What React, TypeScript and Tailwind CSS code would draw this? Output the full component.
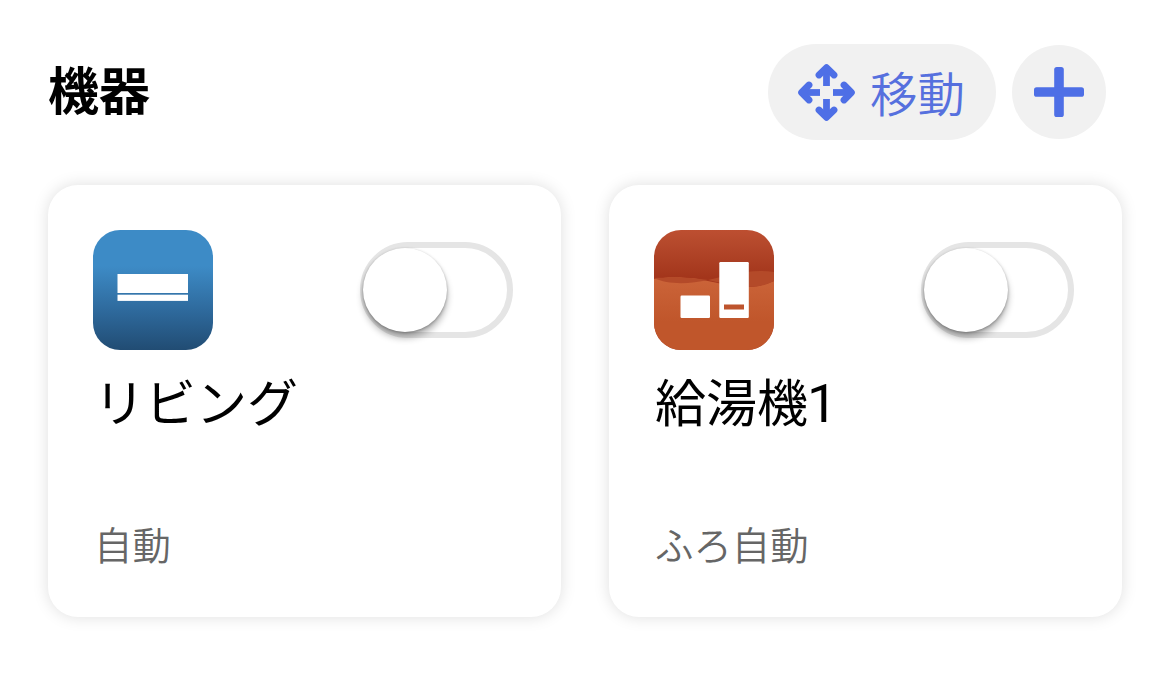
import React from 'react';

interface Device {
  name: string;
  unit?: string;
  mode: string;
  icon: React.ReactNode;
}

const AirConditionerIcon: React.FC = () => (
  <svg className="h-[120px] w-[120px]" viewBox="0 0 120 120">
    <defs>
      <linearGradient id="ac-bg" x1="0" y1="0" x2="0" y2="1">
        <stop offset="0" stopColor="#3d8bc6" />
        <stop offset="0.3" stopColor="#3d8bc6" />
        <stop offset="0.7" stopColor="#2d6799" />
        <stop offset="1" stopColor="#214c73" />
      </linearGradient>
    </defs>
    <rect width="120" height="120" rx="27" fill="url(#ac-bg)" />
    <rect x="24.5" y="44" width="70.5" height="19" fill="#fff" />
    <rect x="24.5" y="64.7" width="70.5" height="6.2" fill="#fff" />
  </svg>
);

const WaterHeaterIcon: React.FC = () => (
  <svg className="h-[120px] w-[120px]" viewBox="0 0 120 120">
    <defs>
      <linearGradient id="heater-top" x1="0" y1="0" x2="0" y2="60" gradientUnits="userSpaceOnUse">
        <stop offset="0" stopColor="#bd4f31" />
        <stop offset="0.25" stopColor="#b4482b" />
        <stop offset="0.8" stopColor="#a3351b" />
      </linearGradient>
      <linearGradient id="heater-water" x1="0" y1="48" x2="0" y2="120" gradientUnits="userSpaceOnUse">
        <stop offset="0" stopColor="#cb6439" />
        <stop offset="0.6" stopColor="#c0562b" />
        <stop offset="1" stopColor="#c0562b" />
      </linearGradient>
      <clipPath id="heater-clip">
        <rect width="120" height="120" rx="27" />
      </clipPath>
    </defs>
    <g clipPath="url(#heater-clip)">
      <rect width="120" height="120" fill="url(#heater-top)" />
      <path d="M0 49C10 47 30 47 44 49C60 52 78 57 94 57C106 57 114 53 120 51V120H0Z" fill="url(#heater-water)" />
      <path d="M0 48C14 55 36 54 54 50C38 47 14 47 0 48Z" fill="#b44a29" />
      <path d="M54 50C72 46 96 38 120 42V51C112 55 106 57 94 57C78 57 68 53 54 50Z" fill="#b44a29" />
    </g>
    <rect x="26.5" y="65.5" width="29.5" height="22.5" rx="1.2" fill="#fff" />
    <rect x="65.3" y="32" width="29.5" height="56" rx="1.2" fill="#fff" />
    <rect x="70" y="74.5" width="20" height="5" fill="#be542d" />
  </svg>
);

const MoveIcon: React.FC = () => (
  <svg className="h-[58px] w-[58px]" viewBox="-28.5 -29.5 58 58" fill="none" stroke="#4e6fe6" strokeWidth="6.8">
    {[0, 90, 180, 270].map((angle) => (
      <g key={angle} transform={`rotate(${angle})`}>
        <path d="M0 -24V-6.5" />
        <path d="M-7.5 -17.5L0 -24.9L7.5 -17.5" strokeLinecap="round" strokeLinejoin="round" />
      </g>
    ))}
  </svg>
);

const PlusIcon: React.FC = () => (
  <svg className="h-[50px] w-[50px]" viewBox="0 0 50 50" fill="#4e6fe6">
    <rect x="20.2" width="9.6" height="50" rx="2.6" />
    <rect y="20.2" width="50" height="9.6" rx="2.6" />
  </svg>
);

const Toggle: React.FC<{ label: string }> = ({ label }) => {
  const [on, setOn] = React.useState(false);

  return (
    <button
      role="switch"
      aria-checked={on}
      aria-label={label}
      onClick={() => setOn(!on)}
      className={`flex h-24 w-[153px] items-center rounded-full border-[6px] border-[#e5e5e5] ${on ? 'justify-end bg-[#4e6fe6]' : 'bg-white'}`}
    >
      <span className="-mx-[3px] h-[84px] w-[84px] rounded-full bg-white shadow-[0_6px_7px_rgba(0,0,0,0.3),0_1px_3px_rgba(0,0,0,0.3)]" />
    </button>
  );
};

const DeviceCard: React.FC<{ device: Device }> = ({ device }) => (
  <div className="flex h-[432px] flex-col rounded-[30px] bg-white px-[45px] pt-[45px] shadow-[0_0_16px_rgba(0,0,0,0.13)]">
    <div className="flex items-center justify-between pr-[3px]">
      {device.icon}
      <Toggle label={device.name} />
    </div>
    <h2 className="mt-5 h-[60px] pl-px text-[51px] leading-[60px] font-normal whitespace-nowrap text-black">
      {device.name}
      {device.unit && <span className="-ml-px font-[Roboto] text-[54px] leading-none font-normal">{device.unit}</span>}
    </h2>
    <p className="mt-[89px] pl-px text-[38.4px] leading-[48px] font-[350] whitespace-nowrap text-[#666]">{device.mode}</p>
  </div>
);

const devices: Device[] = [
  { name: 'リビング', mode: '自動', icon: <AirConditionerIcon /> },
  { name: '給湯機', unit: '1', mode: 'ふろ自動', icon: <WaterHeaterIcon /> },
];

const App: React.FC = () => {
  return (
    <main className="h-[693px] w-[1170px] overflow-hidden bg-white px-12 pt-11 font-['Noto_Sans_CJK_JP',sans-serif]">
      <header className="flex items-center pr-4">
        <h1 className="flex-1 pb-[9px] text-[51px] leading-[60px] font-bold text-black">機器</h1>
        <button className="flex h-24 w-[228px] items-center rounded-full bg-[#f1f1f1] pl-[30px]">
          <MoveIcon />
          <span className="ml-[14px] text-[47.5px] leading-[60px] font-[350] whitespace-nowrap text-[#5670de]">移動</span>
        </button>
        <button aria-label="追加" className="ml-4 flex h-[94px] w-[94px] items-center justify-center rounded-full bg-[#f1f1f1]">
          <PlusIcon />
        </button>
      </header>
      <section className="mt-[45px] grid grid-cols-[513px_513px] gap-12">
        {devices.map((device) => (
          <DeviceCard key={device.name} device={device} />
        ))}
      </section>
    </main>
  );
};

export default App;
